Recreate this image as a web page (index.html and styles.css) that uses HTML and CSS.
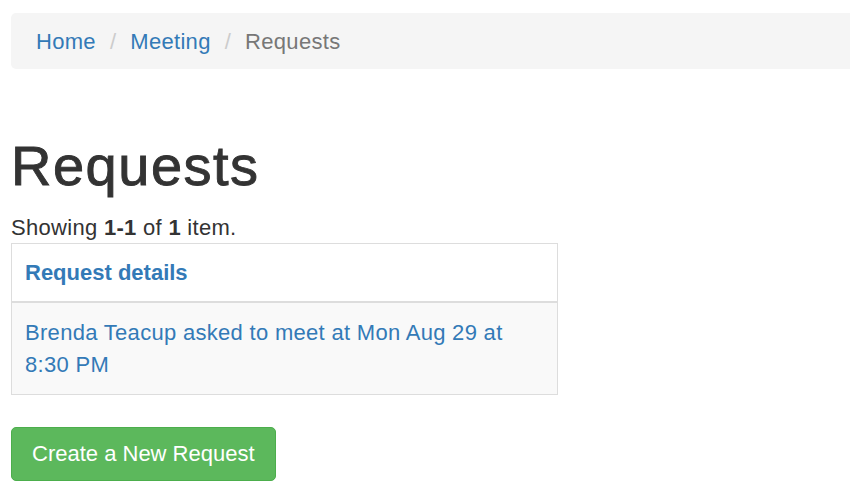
FILE: index.html
```html
<!DOCTYPE html>
<html lang="en">
<head>
<meta charset="utf-8">
<title>Requests</title>
<link rel="stylesheet" href="styles.css">
</head>
<body>
<div class="page">
  <ol class="breadcrumb">
    <li><a href="#">Home</a></li>
    <li class="sep">/</li>
    <li><a href="#">Meeting</a></li>
    <li class="sep">/</li>
    <li class="active">Requests</li>
  </ol>
  <h1 class="title">Requests</h1>
  <div class="summary">Showing <b>1-1</b> of <b>1</b> item.</div>
  <table class="table">
    <thead>
      <tr><th><a href="#">Request details</a></th></tr>
    </thead>
    <tbody>
      <tr><td><a href="#">Brenda Teacup asked to meet at Mon Aug 29 at 8:30 PM</a></td></tr>
    </tbody>
  </table>
  <a class="btn" href="#">Create a New Request</a>
</div>
</body>
</html>
```

FILE: styles.css
```css
html, body {
  margin: 0;
  padding: 0;
  background: #fff;
}
body {
  font-family: "Liberation Sans", Arial, sans-serif;
  font-size: 22px;
  line-height: 31px;
  letter-spacing: 0.3px;
  color: #333;
}
a {
  color: #337ab7;
  text-decoration: none;
}
.page {
  padding: 13px 0 0 11px;
}
.breadcrumb {
  list-style: none;
  margin: 0;
  padding: 12.5px 25px;
  background: #f5f5f5;
  border-radius: 5px 0 0 5px;
  display: flex;
  align-items: baseline;
}
.breadcrumb li {
  white-space: nowrap;
}
.breadcrumb .sep {
  color: #ccc;
  padding: 0 14px 0 14px;
}
.breadcrumb .active {
  color: #777;
}
.title {
  margin: 66px 0 15.5px;
  font-size: 56px;
  font-weight: 400;
  letter-spacing: 1.5px;
  -webkit-text-stroke: 0.9px #333;
  line-height: 61.6px;
  color: #333;
}
.summary {
  line-height: 31px;
}
.table {
  width: 547px;
  border-collapse: collapse;
  margin-bottom: 32px;
}
.table th,
.table td {
  border: 1px solid #ddd;
  padding: 13px 13px;
  text-align: left;
  vertical-align: top;
}
.table th {
  border-bottom: 2px solid #ddd;
  font-weight: bold;
  letter-spacing: 0;
}
.table td {
  background: #f9f9f9;
  padding: 14px 13px;
  line-height: 31.5px;
}
.btn {
  display: inline-block;
  background: #5cb85c;
  border: 1px solid #4cae4c;
  border-radius: 5px;
  color: #fff;
  padding: 10px 20px;
  line-height: 32px;
  letter-spacing: 0;
}
```
